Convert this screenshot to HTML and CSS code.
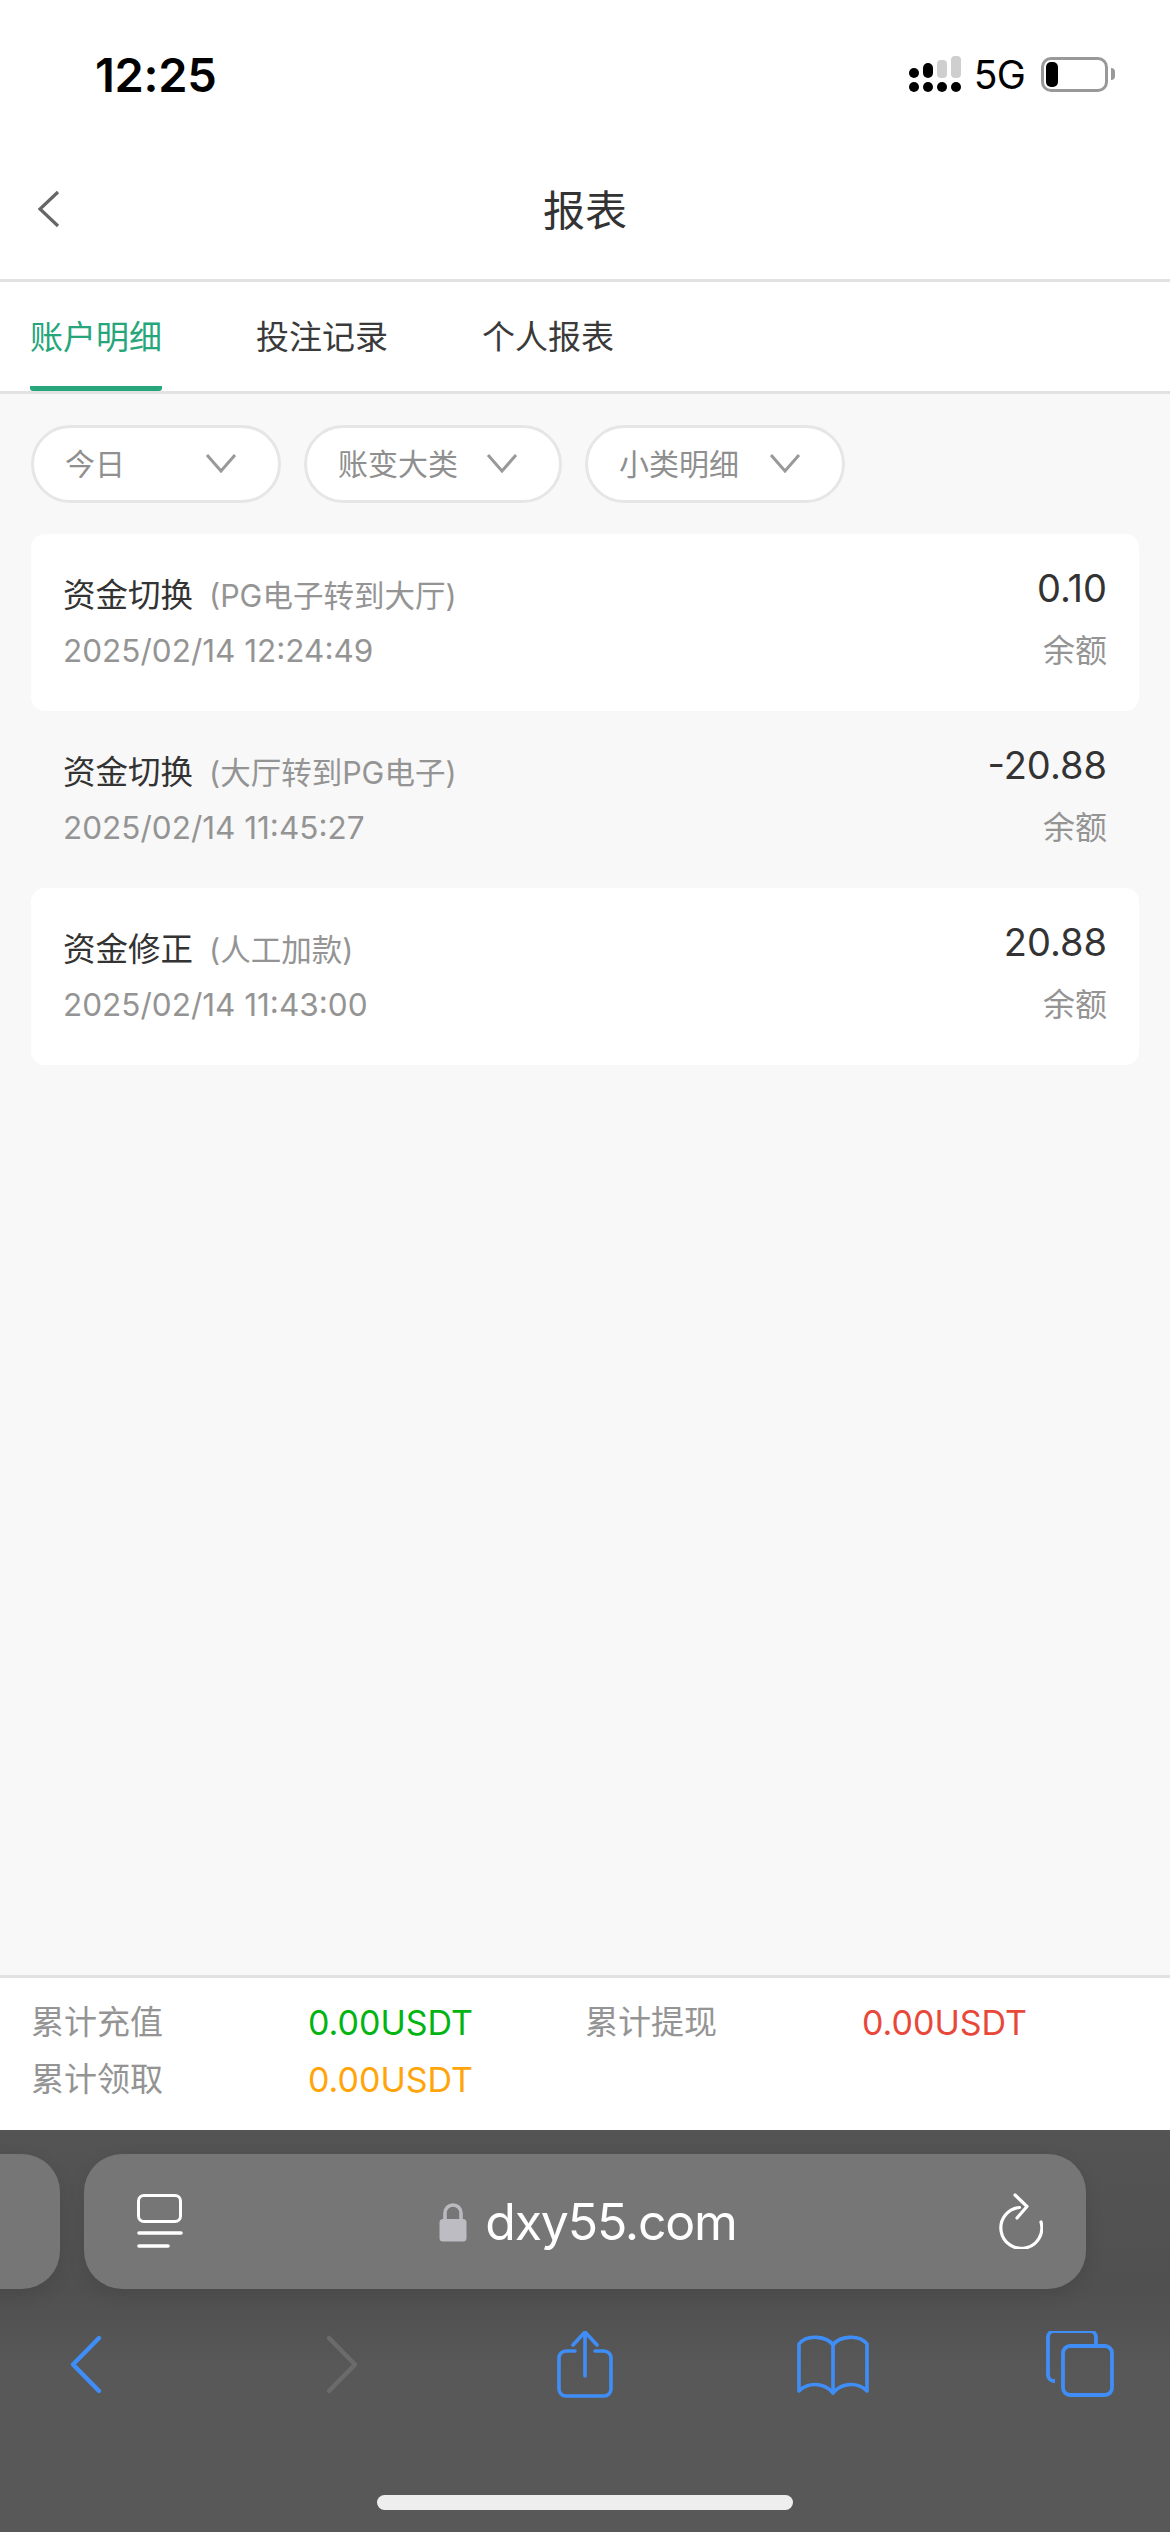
FILE: index.html
```html
<!DOCTYPE html>
<html lang="zh-CN">
<head>
<meta charset="utf-8">
<title>报表</title>
<link rel="stylesheet" href="styles.css">
</head>
<body>
<div class="screen">
  <header class="status">
    <span class="clock">12:25</span>
    <div class="status-right">
      <svg class="signal" width="56" height="36" viewBox="0 0 56 36">
        <g fill="#000">
          <circle cx="5" cy="17" r="5"/><rect x="14" y="7" width="10" height="15" rx="5"/>
          <circle cx="5" cy="31" r="5"/><circle cx="19" cy="31" r="5"/><circle cx="33" cy="31" r="5"/><circle cx="47" cy="31" r="5"/>
        </g>
        <g fill="#cfcfcf"><rect x="28" y="4" width="10" height="18" rx="4"/><rect x="42" y="0" width="10" height="22" rx="4"/></g>
      </svg>
      <span class="net">5G</span>
      <div class="battery"><span class="battery-level"></span></div>
      <span class="battery-nub"></span>
    </div>
  </header>

  <nav class="navbar">
    <svg class="nav-back" width="24" height="38" viewBox="0 0 24 38"><path d="M22 2 L4 19 L22 36" fill="none" stroke="#666" stroke-width="3.2"/></svg>
    <h1 class="nav-title">报表</h1>
  </nav>

  <div class="tabs">
    <span class="tab tab-active">账户明细</span>
    <span class="tab">投注记录</span>
    <span class="tab">个人报表</span>
  </div>

  <main class="content">
    <div class="filters">
      <div class="pill pill-short"><span class="pill-text">今日</span><svg class="chev" width="32" height="20" viewBox="0 0 32 20"><path d="M2 2 L16 18 L30 2" fill="none" stroke="#999" stroke-width="3"/></svg></div>
      <div class="pill"><span class="pill-text">账变大类</span><svg class="chev" width="32" height="20" viewBox="0 0 32 20"><path d="M2 2 L16 18 L30 2" fill="none" stroke="#999" stroke-width="3"/></svg></div>
      <div class="pill"><span class="pill-text">小类明细</span><svg class="chev" width="32" height="20" viewBox="0 0 32 20"><path d="M2 2 L16 18 L30 2" fill="none" stroke="#999" stroke-width="3"/></svg></div>
    </div>

    <ul class="records">
      <li class="record record-white">
        <div class="record-main">
          <div class="record-title">资金切换<span class="record-sub">(PG电子转到大厅)</span></div>
          <div class="record-time">2025/02/14 12:24:49</div>
        </div>
        <div class="record-side">
          <div class="record-amount">0.10</div>
          <div class="record-balance">余额</div>
        </div>
      </li>
      <li class="record">
        <div class="record-main">
          <div class="record-title">资金切换<span class="record-sub">(大厅转到PG电子)</span></div>
          <div class="record-time">2025/02/14 11:45:27</div>
        </div>
        <div class="record-side">
          <div class="record-amount">-20.88</div>
          <div class="record-balance">余额</div>
        </div>
      </li>
      <li class="record record-white">
        <div class="record-main">
          <div class="record-title">资金修正<span class="record-sub">(人工加款)</span></div>
          <div class="record-time">2025/02/14 11:43:00</div>
        </div>
        <div class="record-side">
          <div class="record-amount">20.88</div>
          <div class="record-balance">余额</div>
        </div>
      </li>
    </ul>
  </main>

  <section class="summary">
    <span class="sum-label">累计充值</span><span class="sum-value green">0.00USDT</span>
    <span class="sum-label">累计提现</span><span class="sum-value red">0.00USDT</span>
    <span class="sum-label">累计领取</span><span class="sum-value orange">0.00USDT</span>
  </section>

  <footer class="browser">
    <div class="url-row">
      <div class="tab-peek"></div>
      <div class="url-pill">
        <svg class="reader" width="46" height="60" viewBox="0 0 46 60">
          <rect x="1.500" y="1.500" width="42" height="26" rx="5.500" fill="none" stroke="#fff" stroke-width="3"/>
          <path d="M2 39 H44 M2 52 H31" stroke="#fff" stroke-width="3.600" stroke-linecap="round"/>
        </svg>
        <div class="address">
          <svg class="lock" width="28" height="40" viewBox="0 0 28 40">
            <path d="M6 19 V11 a8 8 0 0 1 16 0 V19" fill="none" stroke="#b9b9bf" stroke-width="3.600"/>
            <rect x="0.500" y="17" width="27" height="22.500" rx="3.500" fill="#bcbcc2"/>
          </svg>
          <span class="domain">dxy55.com</span>
        </div>
        <svg class="reload" width="46" height="56" viewBox="0 0 46 56">
          <path d="M44 29 A20.500 20.500 0 1 1 22.500 14.500" fill="none" stroke="#fff" stroke-width="3.200" stroke-linecap="round"/>
          <path d="M18 2 L30 13.500 L20 25" fill="none" stroke="#fff" stroke-width="3.200" stroke-linecap="round" stroke-linejoin="round"/>
        </svg>
      </div>
    </div>
    <div class="toolbar">
      <svg width="80" height="74" viewBox="0 0 80 74"><path d="M53 7 L27 33.500 L53 60" fill="none" stroke="#3f8ef8" stroke-width="4.400" stroke-linecap="round" stroke-linejoin="round"/></svg>
      <svg width="80" height="74" viewBox="0 0 80 74"><path d="M34 7 L60 33.500 L34 60" fill="none" stroke="#6b6b6b" stroke-width="4.400" stroke-linecap="round" stroke-linejoin="round"/></svg>
      <svg width="80" height="74" viewBox="0 0 80 74">
        <g fill="none" stroke="#3f8ef8" stroke-width="3.600" stroke-linecap="round" stroke-linejoin="round">
          <path d="M32 20 H23 a7 7 0 0 0 -7 7 V58 a7 7 0 0 0 7 7 H61 a7 7 0 0 0 7 -7 V27 a7 7 0 0 0 -7 -7 H52"/>
          <path d="M42 2 V45 M30 14 L42 1 L54 14"/>
        </g>
      </svg>
      <svg width="80" height="74" viewBox="0 0 80 74">
        <g fill="none" stroke="#3f8ef8" stroke-width="3.600" stroke-linecap="round" stroke-linejoin="round">
          <path d="M41 14 C35 5 15 3 7 13 V60 C16 51 32 51 41 62 C50 51 66 51 75 60 V13 C67 3 47 5 41 14 V62"/>
        </g>
      </svg>
      <svg width="80" height="74" viewBox="0 0 80 74">
        <g fill="none" stroke="#3f8ef8" stroke-width="3.800" stroke-linejoin="round">
          <path d="M15 50 H14 a6 6 0 0 1 -6 -6 V6 a6 6 0 0 1 6 -6 H50 a6 6 0 0 1 6 6 V15"/>
          <rect x="23" y="15" width="49" height="49" rx="7"/>
        </g>
      </svg>
    </div>
    <div class="home-indicator"></div>
  </footer>
</div>
</body>
</html>
```
FILE: styles.css
```css
* { box-sizing: border-box; margin: 0; padding: 0; }

html, body { width: 1170px; height: 2532px; overflow: hidden; }

body {
  font-family: "Inter", "Noto Sans CJK SC", "Noto Sans", sans-serif;
  background: #fff;
}

.screen { display: flex; flex-direction: column; width: 1170px; height: 2532px; }

/* status bar */
.status {
  height: 152px;
  display: flex;
  align-items: flex-start;
  justify-content: space-between;
  padding: 48px 55px 0 95px;
}
.clock { font-size: 47px; font-weight: 600; line-height: 54px; color: #000; letter-spacing: -0.3px; }
.status-right { display: flex; align-items: flex-start; margin-top: 8px; }
.signal { margin-right: 9px; }
.net { font-size: 39px; line-height: 37px; color: #000; margin-right: 16px; letter-spacing: -0.8px; }
.battery {
  width: 67px; height: 35px; margin-top: 1px;
  border: 3px solid #999; border-radius: 10px; padding: 2px;
}
.battery-level { display: block; width: 12px; height: 100%; background: #000; border-radius: 5px; }
.battery-nub {
  width: 4px; height: 12px; margin: 12px 0 0 3px;
  background: #999; border-radius: 0 4px 4px 0;
}

/* title bar */
.navbar {
  position: relative;
  height: 130px;
  display: flex;
  align-items: center;
  justify-content: center;
  border-bottom: 3px solid #e2e2e2;
}
.nav-back { position: absolute; left: 36px; top: 38px; }
.nav-title { font-size: 42px; font-weight: 400; color: #333; line-height: 60px; margin-top: -10px; }

/* tabs */
.tabs {
  height: 112px;
  display: flex;
  gap: 94px;
  padding-left: 30px;
  border-bottom: 3px solid #e2e2e2;
  background: #fff;
}
.tab { font-size: 33px; line-height: 110px; height: 109px; color: #3a3a3a; }
.tab-active { color: #27a67c; border-bottom: 5px solid #27a67c; border-radius: 0 0 3px 3px; }

/* filters and records */
.content { flex: 1; background: #f8f8f8; padding: 31px 31px 0 31px; }
.filters { display: flex; gap: 23px; }
.pill {
  height: 78px;
  width: 258px;
  display: flex;
  align-items: center;
  justify-content: space-between;
  padding: 0 41px 0 31px;
  background: #fff;
  border: 3px solid #e6e6e6;
  border-radius: 39px;
  font-size: 30px;
  color: #8f8f8f;
}
.pill-short { width: 250px; }
.pill:last-child { width: 260px; }
.pill-text { margin-top: -5px; }
.chev { flex: none; margin-top: -2px; }

.records { list-style: none; margin-top: 31px; }
.record {
  height: 177px;
  display: flex;
  justify-content: space-between;
  padding: 37px 32px 0;
  border-radius: 14px;
}
.record-white { background: #fff; }
.record-title { font-size: 32.500px; line-height: 50px; color: #333; display: flex; align-items: baseline; }
.record-sub { font-size: 30.500px; color: #949494; margin-left: 16px; }
.record-time { font-size: 31.500px; line-height: 42px; margin-top: 9px; color: #949494; }
.record-side { text-align: right; }
.record-amount { font-size: 38px; line-height: 44px; color: #333; margin-top: -5px; }
.record-balance { font-size: 32px; line-height: 44px; margin-top: 19px; color: #949494; }

/* running totals */
.summary {
  height: 155px;
  display: grid;
  grid-template-columns: repeat(4, 277px);
  grid-auto-rows: 57px;
  padding: 16px 0 0 31px;
  background: #fff;
  border-top: 3px solid #e2e2e2;
  font-size: 33px;
  line-height: 57px;
}
.sum-label { color: #949494; }
.sum-value { font-size: 34px; }
.green { color: #00b411; }
.red { color: #e8483a; }
.orange { color: #ffa50a; }

/* browser chrome */
.browser {
  height: 402px;
  background: linear-gradient(#545454, #505050 40%, #585858 60%);
  padding-top: 24px;
}
.url-row { display: flex; gap: 24px; margin-left: -90px; }
.tab-peek { width: 150px; height: 135px; background: #767676; border-radius: 38px; box-shadow: 0 6px 18px rgba(0,0,0,.1); }
.url-pill {
  width: 1002px; height: 135px;
  display: flex;
  align-items: center;
  justify-content: space-between;
  padding: 0 43px 0 53px;
  background: #767676;
  border-radius: 38px;
  box-shadow: 0 6px 18px rgba(0,0,0,.1);
}
.reader { margin-top: 4px; }
.address { display: flex; align-items: center; gap: 18px; margin-right: 4px; }
.domain { font-size: 50px; line-height: 60px; color: #fff; letter-spacing: -1.200px; }
.reload { margin-top: -2px; }
.toolbar {
  display: flex;
  justify-content: space-between;
  padding: 0 50px 0 46px;
  margin-top: 42px;
}
.home-indicator { width: 416px; height: 15px; margin: 90px auto 0; background: #eee; border-radius: 8px; }
```
